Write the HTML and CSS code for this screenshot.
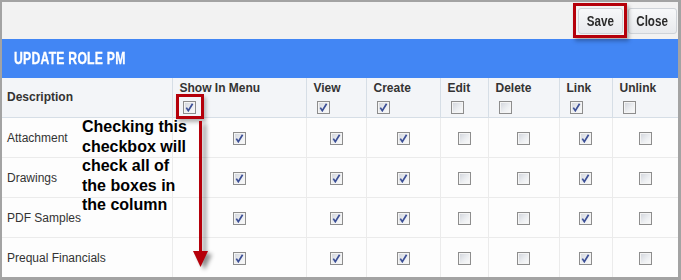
FILE: index.html
```html
<!DOCTYPE html>
<html>
<head>
<meta charset="utf-8">
<link rel="stylesheet" href="styles.css">
</head>
<body>
<div class="frame">
  <div class="toolbar">
    <button class="btn"><span class="btn-label">Save</span></button>
    <button class="btn"><span class="btn-label">Close</span></button>
  </div>
  <div class="titlebar"><span class="title">UPDATE ROLE PM</span></div>
  <table class="grid">
    <colgroup>
      <col class="c-desc"><col class="c-show"><col class="c-view"><col class="c-create"><col class="c-edit"><col class="c-delete"><col class="c-link"><col class="c-unlink">
    </colgroup>
    <thead>
      <tr>
        <th class="th-desc">Description</th>
        <th><div class="th-label">Show In Menu</div><span class="cb on"></span></th>
        <th><div class="th-label">View</div><span class="cb on"></span></th>
        <th><div class="th-label">Create</div><span class="cb on"></span></th>
        <th><div class="th-label">Edit</div><span class="cb"></span></th>
        <th><div class="th-label">Delete</div><span class="cb"></span></th>
        <th><div class="th-label">Link</div><span class="cb on"></span></th>
        <th><div class="th-label">Unlink</div><span class="cb"></span></th>
      </tr>
    </thead>
    <tbody>
      <tr>
        <td class="td-desc">Attachment</td>
        <td><span class="cb on"></span></td><td><span class="cb on"></span></td><td><span class="cb on"></span></td><td><span class="cb"></span></td><td><span class="cb"></span></td><td><span class="cb on"></span></td><td><span class="cb"></span></td>
      </tr>
      <tr>
        <td class="td-desc">Drawings</td>
        <td><span class="cb on"></span></td><td><span class="cb on"></span></td><td><span class="cb on"></span></td><td><span class="cb"></span></td><td><span class="cb"></span></td><td><span class="cb on"></span></td><td><span class="cb"></span></td>
      </tr>
      <tr>
        <td class="td-desc">PDF Samples</td>
        <td><span class="cb on"></span></td><td><span class="cb on"></span></td><td><span class="cb on"></span></td><td><span class="cb"></span></td><td><span class="cb"></span></td><td><span class="cb on"></span></td><td><span class="cb"></span></td>
      </tr>
      <tr class="last">
        <td class="td-desc">Prequal Financials</td>
        <td><span class="cb on"></span></td><td><span class="cb on"></span></td><td><span class="cb on"></span></td><td><span class="cb"></span></td><td><span class="cb"></span></td><td><span class="cb on"></span></td><td><span class="cb"></span></td>
      </tr>
    </tbody>
  </table>

  <div class="hl hl-save"></div>
  <div class="hl hl-check"></div>
  <div class="note">Checking this<br>checkbox will<br>check all of<br>the boxes in<br>the column</div>
  <svg class="arrow" width="30" height="160" viewBox="0 0 30 160">
    <rect x="9" y="4" width="3" height="132" fill="#b5000a"/>
    <polygon points="3,134 18,134 10.5,150" fill="#b5000a"/>
  </svg>
</div>
</body>
</html>
```
FILE: styles.css
```css
* { box-sizing: border-box; }
html, body { margin: 0; padding: 0; background: #fff; }
body { font-family: "Liberation Sans", Arial, sans-serif; }

.frame {
  position: relative;
  width: 681px;
  height: 280px;
  border-style: solid;
  border-color: #a3a3a3;
  border-width: 2px 3px 3px 2px;
  background: #fcfcfc;
  overflow: hidden;
}

.toolbar {
  height: 37px;
  background: #f2f2f2;
  display: flex;
  justify-content: flex-end;
  align-items: center;
  gap: 5px;
  padding-right: 1px;
  padding-top: 1px;
}

.btn {
  height: 26px;
  padding: 0;
  border: 1px solid #cfd3d8;
  border-radius: 3px;
  background: linear-gradient(#f7f8f9, #e8eaed);
  color: #2b2b2b;
  font-family: "Liberation Sans", Arial, sans-serif;
  font-weight: bold;
  font-size: 14px;
  display: flex;
  align-items: center;
  justify-content: center;
}
.btn:first-child { width: 45px; }
.btn:last-child { width: 49px; }
.btn-label { display: inline-block; transform: scaleX(0.83); }

.titlebar {
  height: 39px;
  background: #4286f4;
  display: flex;
  align-items: center;
  padding-left: 12px;
}
.title {
  display: inline-block;
  color: #fff;
  font-weight: bold;
  font-size: 17px;
  transform: scaleX(0.72);
  transform-origin: left center;
  letter-spacing: 0.3px;
  -webkit-text-stroke: 0.3px #fff;
}

.grid {
  width: 676px;
  table-layout: fixed;
  border-collapse: collapse;
  font-size: 12px;
  color: #333;
}
.c-desc { width: 170px; }
.c-show { width: 134px; }
.c-view { width: 60px; }
.c-create { width: 74px; }
.c-edit { width: 48px; }
.c-delete { width: 71px; }
.c-link { width: 53px; }
.c-unlink { width: 66px; }

.grid th {
  background: #f3f5f8;
  height: 39px;
  padding: 3px 0 0 8px;
  text-align: left;
  vertical-align: top;
  font-weight: bold;
  border-bottom: 1px solid #d6dee6;
  border-left: 1px solid #d6dee6;
}
.grid th.th-desc {
  vertical-align: middle;
  padding: 0 0 0 5px;
  border-left: none;
}
.th-label { height: 15px; line-height: 15px; margin-bottom: 4px; margin-left: -1px; }
.grid th .cb { margin-left: 2px; }

.grid td {
  height: 40px;
  padding: 2px 0 0 0;
  text-align: center;
  vertical-align: middle;
  background: #fdfdfd;
  border-bottom: 1px solid #ebebeb;
  border-left: 1px solid #ebebeb;
}
.grid td.td-desc {
  text-align: left;
  padding-left: 5px;
  border-left: none;
}
.grid tr.last td { border-bottom: none; }

.cb {
  display: inline-block;
  width: 13px;
  height: 13px;
  vertical-align: middle;
  border: 1px solid #8d8d8d;
  box-shadow: inset 0 0 0 1px #f4f4f4;
  background: linear-gradient(135deg, #cfd3da 0%, #eceef1 55%, #fbfbfb 100%);
}
.cb.on {
  background:
    url("data:image/svg+xml,%3Csvg xmlns='http://www.w3.org/2000/svg' width='11' height='11' viewBox='0 0 11 11'%3E%3Cpath d='M2.3 5.6 L4.3 8.6 L8.6 1.8' fill='none' stroke='%233c4f96' stroke-width='1.7'/%3E%3C/svg%3E") center/11px 11px no-repeat,
    linear-gradient(135deg, #cfd3da 0%, #eceef1 55%, #fbfbfb 100%);
}

.hl {
  position: absolute;
  border: 3px solid #b5000a;
  box-shadow: 2px 3px 4px rgba(0,0,0,0.3);
}
.hl-save { left: 571px; top: 1px; width: 54px; height: 35px; }
.hl-check { left: 174px; top: 92px; width: 28px; height: 25px; }

.note {
  position: absolute;
  left: 80px;
  top: 115px;
  font-size: 16px;
  line-height: 19.5px;
  font-weight: bold;
  color: #000;
}

.arrow {
  position: absolute;
  left: 188px;
  top: 115px;
  filter: drop-shadow(4px 3px 2px rgba(0,0,0,0.45));
}
```
